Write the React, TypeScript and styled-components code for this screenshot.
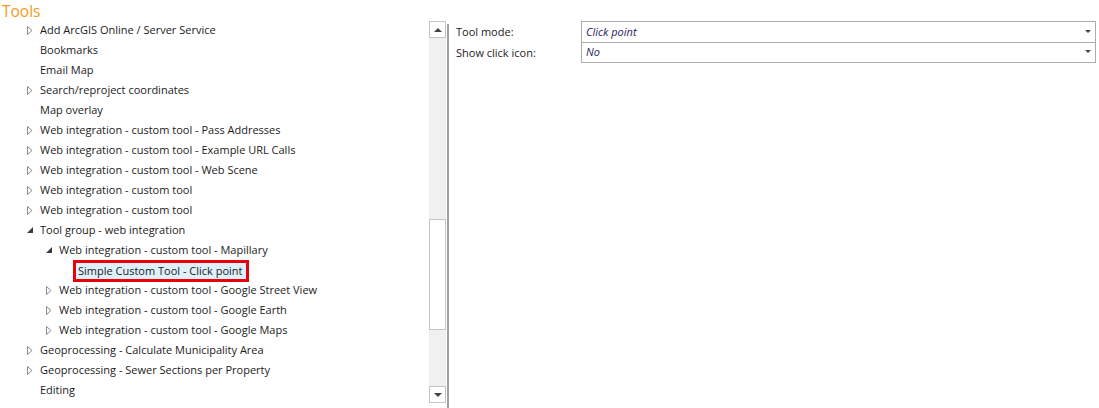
import React from "react";
import styled, { createGlobalStyle } from "styled-components";

const Global = createGlobalStyle`
  html, body { margin: 0; padding: 0; background: #fff; }
  body { font-family: "Open Sans", "Noto Sans", sans-serif; font-size: 11px; color: #1b1b1b; }
`;

const Page = styled.div`
  width: 1099px;
  height: 408px;
  display: flex;
  flex-direction: column;
  overflow: hidden;
`;

const Title = styled.div`
  height: 20px;
  line-height: 22px;
  padding-left: 2px;
  font-size: 15.5px;
  color: #f39a21;
`;

const Main = styled.div`
  flex: 1;
  display: flex;
  min-height: 0;
`;

const TreePane = styled.div`
  width: 429px;
  display: flex;
  flex-direction: column;
`;

const Row = styled.div<{ $level: number }>`
  height: 20px;
  display: flex;
  align-items: center;
  padding-left: ${(p) => 25 + p.$level * 19}px;
  white-space: nowrap;
`;

const Toggle = styled.span`
  width: 15px;
  height: 20px;
  display: flex;
  align-items: center;
  justify-content: flex-start;
  padding-left: 2px;
  box-sizing: border-box;
`;

const Label = styled.span<{ $selected?: boolean }>`
  padding: 0 2px;
  height: 16px;
  line-height: 16px;
  margin-left: -2px;
  ${(p) =>
    p.$selected
      ? `background: #dff0fb; padding: 0 3px 0 2px; margin-top: 2px; outline: 3px solid #e8000b; outline-offset: 0px;`
      : ""}
`;

const ScrollBar = styled.div`
  width: 17px;
  margin-top: 1px;
  height: 382px;
  background: #f0f0f0;
  display: flex;
  flex-direction: column;
`;

const ScrollBtn = styled.div`
  height: 17px;
  box-sizing: border-box;
  border: 1px solid #c4c4c4;
  background: #fff;
  display: flex;
  align-items: center;
  justify-content: center;
`;

const Track = styled.div`
  flex: 1;
  display: flex;
  flex-direction: column;
`;

const Thumb = styled.div<{ $top: number; $height: number }>`
  margin-top: ${(p) => p.$top}px;
  height: ${(p) => p.$height}px;
  box-sizing: border-box;
  border: 1px solid #c4c4c4;
  background: #fff;
`;

const Separator = styled.div`
  width: 2px;
  margin-left: 1px;
  margin-top: 4px;
  background: #a0a0a0;
`;

const PropPane = styled.div`
  flex: 1;
  padding-left: 7px;
  padding-top: 1px;
  padding-right: 3px;
`;

const PropRow = styled.div`
  display: flex;
  height: 21px;
`;

const PropLabel = styled.div`
  width: 125px;
  line-height: 21px;
`;

const Combo = styled.div<{ $first?: boolean }>`
  flex: 1;
  box-sizing: border-box;
  border: 1px solid #acacac;
  border-top-width: ${(p) => (p.$first ? 1 : 0)}px;
  height: ${(p) => (p.$first ? 22 : 21)}px;
  display: flex;
  align-items: center;
  justify-content: space-between;
  padding: 0 4px 1px 4px;
  font-style: italic;
  color: #1f1d5c;
`;

const Caret = styled.span`
  width: 0;
  height: 0;
  border-left: 3px solid transparent;
  border-right: 3px solid transparent;
  border-top: 3px solid #444;
`;

const UpArrow = styled.span`
  width: 0;
  height: 0;
  border-left: 4px solid transparent;
  border-right: 4px solid transparent;
  border-bottom: 4px solid #444;
`;

const DownArrow = styled.span`
  width: 0;
  height: 0;
  border-left: 4px solid transparent;
  border-right: 4px solid transparent;
  border-top: 4px solid #444;
`;

type Item = { text: string; level: number; toggle?: "closed" | "open"; selected?: boolean };

const items: Item[] = [
  { text: "Add ArcGIS Online / Server Service", level: 0, toggle: "closed" },
  { text: "Bookmarks", level: 0 },
  { text: "Email Map", level: 0 },
  { text: "Search/reproject coordinates", level: 0, toggle: "closed" },
  { text: "Map overlay", level: 0 },
  { text: "Web integration - custom tool - Pass Addresses", level: 0, toggle: "closed" },
  { text: "Web integration - custom tool - Example URL Calls", level: 0, toggle: "closed" },
  { text: "Web integration - custom tool - Web Scene", level: 0, toggle: "closed" },
  { text: "Web integration - custom tool", level: 0, toggle: "closed" },
  { text: "Web integration - custom tool", level: 0, toggle: "closed" },
  { text: "Tool group - web integration", level: 0, toggle: "open" },
  { text: "Web integration - custom tool - Mapillary", level: 1, toggle: "open" },
  { text: "Simple Custom Tool - Click point", level: 2, selected: true },
  { text: "Web integration - custom tool - Google Street View", level: 1, toggle: "closed" },
  { text: "Web integration - custom tool - Google Earth", level: 1, toggle: "closed" },
  { text: "Web integration - custom tool - Google Maps", level: 1, toggle: "closed" },
  { text: "Geoprocessing - Calculate Municipality Area", level: 0, toggle: "closed" },
  { text: "Geoprocessing - Sewer Sections per Property", level: 0, toggle: "closed" },
  { text: "Editing", level: 0 },
];

const ToggleIcon = ({ kind }: { kind?: "closed" | "open" }) => {
  if (kind === "closed")
    return (
      <svg width="6" height="9" viewBox="0 0 6 9">
        <path d="M0.5 0.5 L5 4.5 L0.5 8.5 Z" fill="none" stroke="#8a8a8a" strokeWidth="1" />
      </svg>
    );
  if (kind === "open")
    return (
      <svg width="6" height="6" viewBox="0 0 6 6">
        <path d="M6 0 L6 6 L0 6 Z" fill="#3c3c3c" />
      </svg>
    );
  return null;
};

export default function App() {
  return (
    <Page>
      <Global />
      <Title>Tools</Title>
      <Main>
        <TreePane>
          {items.map((it, i) => (
            <Row key={i} $level={it.level}>
              <Toggle>
                <ToggleIcon kind={it.toggle} />
              </Toggle>
              <Label $selected={it.selected}>{it.text}</Label>
            </Row>
          ))}
        </TreePane>
        <ScrollBar>
          <ScrollBtn>
            <UpArrow />
          </ScrollBtn>
          <Track>
            <Thumb $top={181} $height={111} />
          </Track>
          <ScrollBtn>
            <DownArrow />
          </ScrollBtn>
        </ScrollBar>
        <Separator />
        <PropPane>
          <PropRow>
            <PropLabel>Tool mode:</PropLabel>
            <Combo $first>
              <span>Click point</span>
              <Caret />
            </Combo>
          </PropRow>
          <PropRow>
            <PropLabel>Show click icon:</PropLabel>
            <Combo>
              <span>No</span>
              <Caret />
            </Combo>
          </PropRow>
        </PropPane>
      </Main>
    </Page>
  );
}
